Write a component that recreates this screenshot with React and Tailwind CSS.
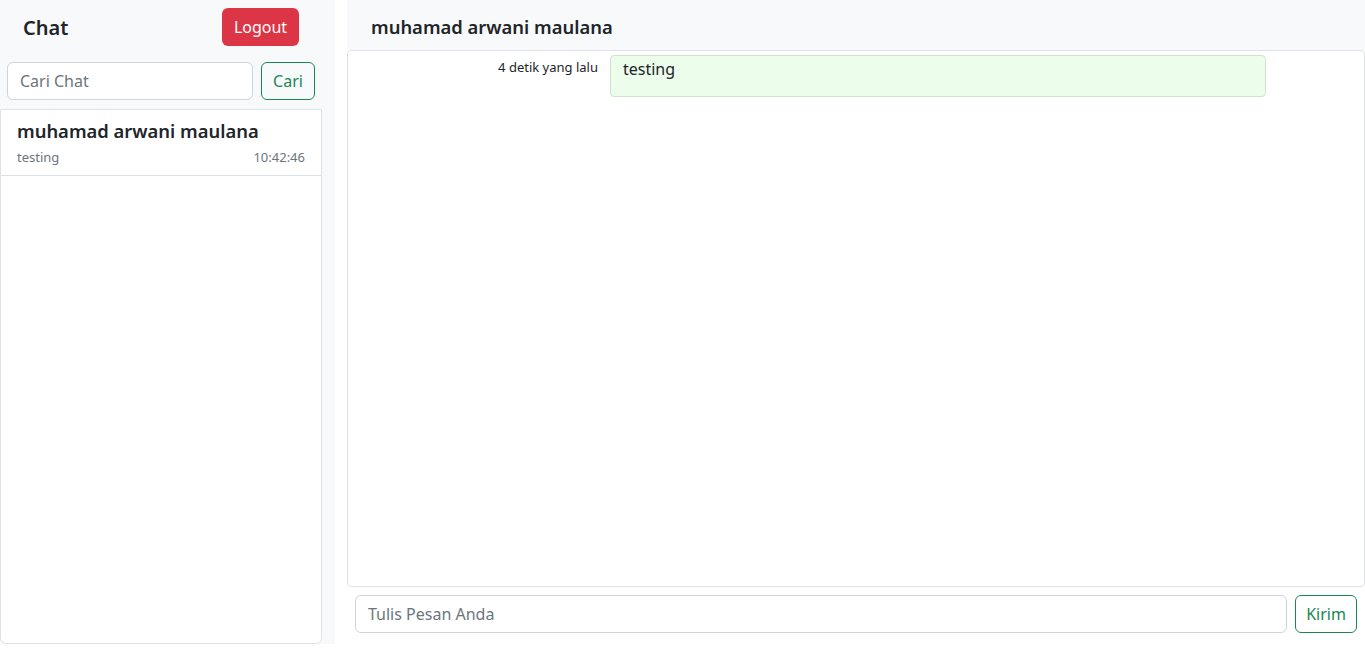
export default function App() {
  const font = { fontFamily: '"Noto Sans", "Open Sans", sans-serif' };
  return (
    <div className="flex w-[1365px] h-[656px] bg-white text-[#212529]" style={font}>
      <div className="w-[335px] h-[644px] bg-[#f8f9fa] flex flex-col shrink-0">
        <div className="flex items-center h-[54px]">
          <div className="pl-[23px] text-[20px] font-semibold w-[222px] leading-none pt-[2px]">Chat</div>
          <button className="w-[77px] h-[38px] rounded-[6px] bg-[#dc3545] text-white text-[16px]">Logout</button>
        </div>
        <div className="flex items-center gap-[8px] pl-[7px] mt-[8px]">
          <div className="w-[246px] h-[38px] border border-[#ced4da] rounded-[6px] bg-white flex items-center px-[12px] text-[16px] text-[#6c757d]">Cari Chat</div>
          <button className="w-[54px] h-[38px] border border-[#198754] rounded-[6px] text-[#198754] text-[16px]">Cari</button>
        </div>
        <div className="mt-[9px] w-[322px] flex-1 bg-white border border-[#dee2e6] rounded-b-[6px]">
          <div className="border-b border-[#dee2e6] px-[16px] pt-[8px] pb-[7px]">
            <div className="text-[18.4px] font-semibold leading-[26px]">muhamad arwani maulana</div>
            <div className="flex justify-between text-[13px] text-[#6c757d] mt-[4px]">
              <span>testing</span>
              <span>10:42:46</span>
            </div>
          </div>
        </div>
      </div>
      <div className="ml-[12px] flex-1 flex flex-col">
        <div className="h-[50px] bg-[#f8f9fa] flex items-center pl-[24px] pt-[3px] text-[18.4px] font-semibold">muhamad arwani maulana</div>
        <div className="h-[537px] border border-[#dee2e6] rounded-[4px] bg-white pt-[4px]">
          <div className="flex items-start">
            <div className="w-[262px] text-right text-[13px] pt-[3px] pr-[12px]">4 detik yang lalu</div>
            <div className="w-[656px] h-[42px] bg-[#edfdec] border border-[#cfe3cf] rounded-[4px] px-[12px] pt-[1px] text-[16px]">testing</div>
          </div>
        </div>
        <div className="flex items-center gap-[8px] pl-[8px] mt-[8px]">
          <div className="w-[932px] h-[38px] border border-[#ced4da] rounded-[6px] bg-white flex items-center px-[12px] text-[16px] text-[#6c757d]">Tulis Pesan Anda</div>
          <button className="w-[62px] h-[38px] border border-[#198754] rounded-[6px] text-[#198754] text-[16px]">Kirim</button>
        </div>
      </div>
    </div>
  );
}
